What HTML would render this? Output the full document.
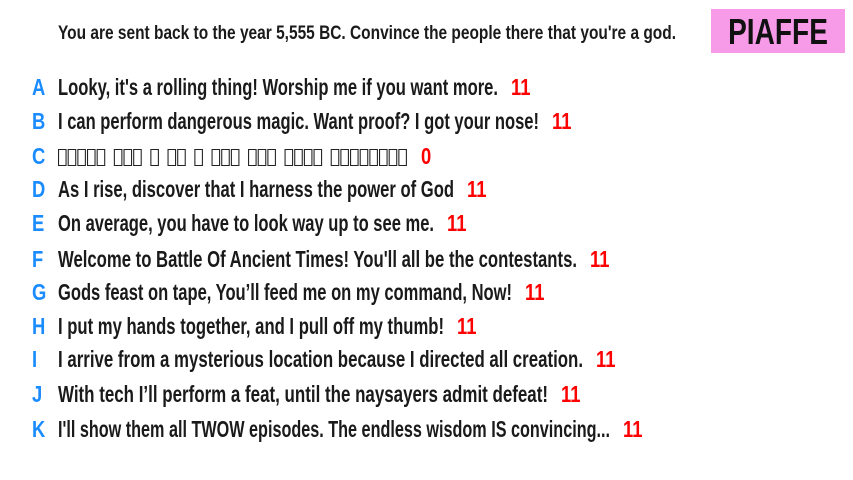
<!DOCTYPE html>
<html><head><meta charset="utf-8"><style>
body{margin:0;width:853px;height:480px;background:#fff;position:relative;overflow:hidden;font-family:"Liberation Sans Narrow","Liberation Sans",sans-serif;}
.r{position:absolute;left:0;height:24px;line-height:24px;white-space:nowrap;font-size:23px;font-weight:bold}
.l{position:absolute;left:32px;color:#1a8cff;font-weight:bold;display:inline-block;transform-origin:left center}
.t{position:absolute;left:58px;color:#1a1a1a;display:inline-block;transform-origin:left center}
.n{position:absolute;color:#f00;font-weight:bold;display:inline-block;transform-origin:left center}
.h{position:absolute;left:58px;top:22px;font-size:19px;font-weight:bold;line-height:24px;color:#1a1a1a;white-space:nowrap;display:inline-block;transform-origin:left center}
.p{position:absolute;left:711px;top:9px;width:134px;height:44px;background:#f79be9;color:#111;font-size:36px;line-height:46px;text-align:center;font-weight:bold}
.p span{display:inline-block;transform:scaleX(0.78)}
.bx{display:inline-block;width:6px;height:15px;border:1.5px solid #222;margin-right:1px;vertical-align:-2px}
.g{display:inline-block;width:7px}
</style></head><body>
<div class="h" id="hd">You are sent back to the year 5,555 BC. Convince the people there that you're a god.</div>
<div class="p"><span>PIAFFE</span></div>
<div id="rows"></div>
<script>
var rows=[
["A","Looky, it's a rolling thing! Worship me if you want more.","11",87,498],
["B","I can perform dangerous magic. Want proof? I got your nose!","11",121,539],
["C",null,"0",156,408],
["D","As I rise, discover that I harness the power of God","11",189,454],
["E","On average, you have to look way up to see me.","11",223,434],
["F","Welcome to Battle Of Ancient Times! You'll all be the contestants.","11",259,577],
["G","Gods feast on tape, You\u2019ll feed me on my command, Now!","11",292,512],
["H","I put my hands together, and I pull off my thumb!","11",326,444],
["I","I arrive from a mysterious location because I directed all creation.","11",359,583],
["J","With tech I\u2019ll perform a feat, until the naysayers admit defeat!","11",394,548],
["K","I'll show them all TWOW episodes. The endless wisdom IS convincing...","11",429,610]];
var c=document.getElementById('rows'),html='';
rows.forEach(function(r,i){
 var t=r[1];
 if(t===null){var g=[5,3,1,2,1,3,3,4,8];t=g.map(function(n){var s='';for(var k=0;k<n;k++)s+='<span class="bx"></span>';return s}).join('<span class="g"></span>');}
 html+='<div class="r" style="top:'+(r[3]-12)+'px"><span class="l">'+r[0]+'</span><span class="t" id="t'+i+'">'+t+'</span><span class="n" style="left:'+(r[4]+13)+'px">'+r[2]+'</span></div>';
});
c.innerHTML=html;
function fit(el,w){var a=el.getBoundingClientRect().width;if(a>0){var s=w/a;el.style.transform='scaleX('+s+')';}}
rows.forEach(function(r,i){fit(document.getElementById('t'+i),r[4]-58);});
var ls=document.querySelectorAll('.l,.n');for(var k=0;k<ls.length;k++)ls[k].style.transform='scaleX(0.8)';
fit(document.getElementById('hd'),618);
</script>
</body></html>
